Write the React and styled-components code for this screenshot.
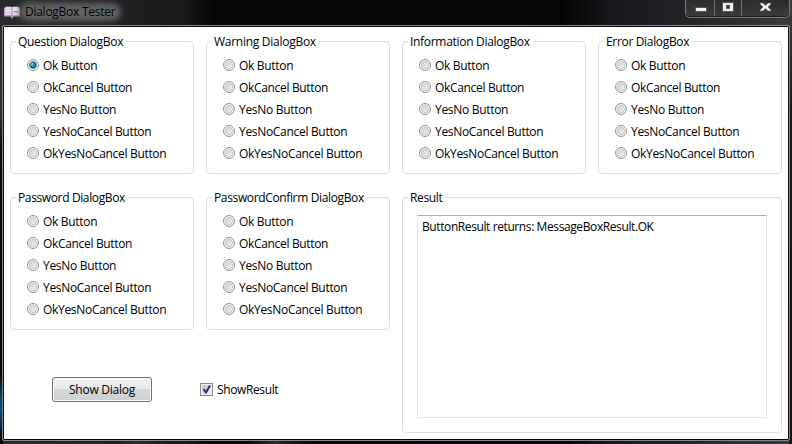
import React from "react";
import styled, { createGlobalStyle } from "styled-components";

const GlobalStyle = createGlobalStyle`
  html, body { margin: 0; padding: 0; overflow: hidden; background: #000; }
  * { box-sizing: border-box; }
`;

const Frame = styled.div`
  width: 792px;
  height: 444px;
  display: flex;
  flex-direction: column;
  padding: 0 2px 3px 2px;
  color: #000;
  font: 12px/16px "Open Sans", "Noto Sans", sans-serif;
  white-space: nowrap;
  background:
    radial-gradient(ellipse 5px 34px at 0 407px, #0b5c92 0, rgba(8, 50, 80, 0) 100%),
    linear-gradient(90deg, transparent 115px, #292b2e 135px, transparent 165px) 0 441px / 100% 3px no-repeat,
    linear-gradient(90deg, transparent 245px, #292b2e 275px, transparent 310px) 0 441px / 100% 3px no-repeat,
    linear-gradient(180deg, #292b2d 0, #303234 110px, #0b0c0d 150px, #050607 440px) 0 0 / 3px 100% no-repeat,
    linear-gradient(180deg, #3b3d3e 0, #17191a 110px, #17120c 400px) 789px 0 / 3px 100% no-repeat,
    linear-gradient(24deg, transparent 72%, rgba(65, 68, 70, 0.5) 94%) 592px 0 / 200px 26px no-repeat,
    linear-gradient(90deg, #292b2d 0, #1d1f20 130px, #17191b 185px, #020405 215px, #020405 560px, #15171a 610px, #202325 680px, #393c3e 792px);
`;

const TitleBar = styled.header`
  height: 25px;
  display: flex;
  align-items: flex-start;
  justify-content: space-between;
`;

const TitleGroup = styled.div`
  display: flex;
  align-items: center;
  padding: 4px 0 0 2px;
`;

const Title = styled.span`
  position: relative;
  z-index: 0;
  margin-left: 5px;
  letter-spacing: ${(p) => p.$track}px;
  &::before {
    content: "";
    position: absolute;
    z-index: -1;
    inset: -1px -6px -1px -6px;
    border-radius: 9px;
    background: #626466;
    filter: blur(3px);
  }
`;

const CaptionButtons = styled.div`
  width: 105px;
  height: 18px;
  display: grid;
  grid-template-columns: 29px 27px 1fr;
  border: 1px solid #77797a;
  border-top: 0;
  border-radius: 0 0 5px 5px;
  background: #303234;
  box-shadow: inset 0 -1px 0 #1b1d1e;
`;

const CaptionButton = styled.button`
  display: flex;
  justify-content: center;
  padding: 0;
  border: 0;
  border-right: 1px solid ${(p) => (p.$last ? "transparent" : "#707274")};
  background: linear-gradient(180deg, #2b2d2f, #393b3d);
  border-radius: ${(p) => (p.$last ? "0 0 4px 0" : "0")};
  height: 16px;
`;

const Client = styled.main`
  width: 788px;
  height: 416px;
  border: 1px solid #85878a;
  border-radius: 2px;
  outline: 1px solid #080808;
  outline-offset: -2px;
  padding: 9px 0 0 7px;
  background: #fff;
  display: grid;
  grid-template-columns: repeat(3, 184px) 184px;
  grid-template-rows: 139px 139px 103px;
  column-gap: 12px;
  row-gap: 17px;
`;

const Group = styled.fieldset`
  position: relative;
  width: 100%;
  min-width: 0;
  height: ${(p) => (p.$tall ? "236px" : "133px")};
  grid-column: ${(p) => (p.$tall ? "3 / 5" : "auto")};
  grid-row: ${(p) => (p.$tall ? "2 / 4" : "auto")};
  margin: 6px 0 0;
  padding: 0;
  border: 1px solid #d5dfe5;
  border-radius: 4px;
`;

const Legend = styled.span`
  position: absolute;
  top: -8px;
  left: 5px;
  padding: 0 3px 0 2px;
  background: #fff;
  letter-spacing: ${(p) => p.$track}px;
`;

const Options = styled.div`
  display: flex;
  flex-direction: column;
  padding: 13px 0 0 16px;
`;

const Option = styled.label`
  height: 22px;
  display: flex;
  align-items: center;
  gap: 4px;
`;

const Text = styled.span`
  letter-spacing: ${(p) => p.$track}px;
`;

const Radio = styled.span`
  width: 12px;
  height: 12px;
  margin-bottom: 2px;
  border: 1px solid #929393;
  border-radius: 50%;
  background: ${(p) =>
    p.$on
      ? "radial-gradient(circle at 4px 4px, #83d8f1 0, rgba(131, 216, 241, 0) 2.5px), radial-gradient(circle at 5px 5px, #1f86b4 1.5px, #17516f 3.2px, #f0f2f3 4.1px)"
      : "radial-gradient(circle at 5px 5px, transparent 2.8px, #bfc1c3 3.4px, #f4f4f4 4.3px), linear-gradient(135deg, #c8cbce, #f4f4f4)"};
`;

const Output = styled.div`
  width: 350px;
  height: 203px;
  margin: 17px 0 0 14px;
  padding: 3px 4px;
  border: 1px solid #e3e5e7;
  border-top-color: #abadb3;
  border-radius: 1px;
`;

const Footer = styled.div`
  grid-column: 1 / 3;
  display: flex;
  align-items: flex-start;
  padding: 30px 0 0 42px;
`;

const PushButton = styled.button`
  width: 100px;
  height: 25px;
  padding: 0;
  border: 1px solid #707070;
  border-radius: 3px;
  box-shadow: inset 0 0 0 1px #fafafa;
  background: linear-gradient(180deg, #f3f3f3 0, #e8e9ea 48%, #d6d8da 50%, #cdd0d2 100%);
  font: inherit;
  color: #000;
`;

const CheckLabel = styled.label`
  display: flex;
  align-items: center;
  gap: 4px;
  height: 25px;
  margin-left: 48px;
`;

const CheckBox = styled.span`
  width: 13px;
  height: 13px;
  border: 1px solid #858789;
  background: linear-gradient(135deg, #b9bdc5, #f5f5f5);
  box-shadow: inset 0 0 0 1px #f2f2f2;
  svg { display: block; }
`;

const groups = [
  { name: "Question DialogBox", track: -0.3, selected: 0 },
  { name: "Warning DialogBox", track: -0.27 },
  { name: "Information DialogBox", track: -0.3 },
  { name: "Error DialogBox", track: -0.33 },
  { name: "Password DialogBox", track: -0.37 },
  { name: "PasswordConfirm DialogBox", track: -0.36 },
];

const options = [
  { label: "Ok Button", track: -0.31 },
  { label: "OkCancel Button", track: -0.33 },
  { label: "YesNo Button", track: -0.3 },
  { label: "YesNoCancel Button", track: -0.31 },
  { label: "OkYesNoCancel Button", track: -0.31 },
];

function BookIcon() {
  return (
    <svg width="16" height="16" viewBox="0 0 16 16">
      <path d="M0 4 2 2.500h5l1 1 1-1h5L16 4v8.500H9.500L8 15l-1.500-2.500H0z" fill="#b99abb" />
      <path d="M1 4.500 2.500 3H7l1 1v7H1z" fill="#d9dbef" />
      <path d="M8 4l1-1h4.500L15 4.500V11H8z" fill="#efe2ee" />
      <path d="M1 9h6.500M8.500 9H15" stroke="#e8cbe0" strokeWidth="2" />
      <path d="M8 4v8M9.500 7.500H14" stroke="#a184ad" fill="none" />
    </svg>
  );
}

export default function App() {
  return (
    <>
      <GlobalStyle />
      <Frame>
        <TitleBar>
          <TitleGroup>
            <BookIcon />
            <Title $track={-0.26}>DialogBox Tester</Title>
          </TitleGroup>
          <CaptionButtons>
            <CaptionButton aria-label="Minimize">
              <svg width="28" height="16">
                <rect x="9.5" y="7.5" width="11" height="4" fill="#f4f4f4" stroke="#55585b" />
              </svg>
            </CaptionButton>
            <CaptionButton aria-label="Maximize">
              <svg width="26" height="16">
                <path d="M7.500 2.500h11v9h-11zM11.500 5.500v3h3v-3z" fill="#f1f1f1" stroke="#55585b" fillRule="evenodd" />
              </svg>
            </CaptionButton>
            <CaptionButton $last aria-label="Close">
              <svg width="46" height="16">
                <path d="M18 3h3l2.5 2.5L26 3h3v1l-3 3 3 3v1h-3l-2.500-2.500L21 11h-3v-1l3-3-3-3z" fill="#f4f4f4" stroke="#55585b" strokeWidth=".5" />
              </svg>
            </CaptionButton>
          </CaptionButtons>
        </TitleBar>
        <Client>
          {groups.map(({ name, track, selected }) => (
            <Group key={name}>
              <Legend $track={track}>{name}</Legend>
              <Options>
                {options.map((option, i) => (
                  <Option key={option.label}>
                    <Radio $on={i === selected} />
                    <Text $track={option.track}>{option.label}</Text>
                  </Option>
                ))}
              </Options>
            </Group>
          ))}
          <Group $tall>
            <Legend $track={-0.35}>Result</Legend>
            <Output>
              <Text $track={-0.4}>ButtonResult returns: MessageBoxResult.OK</Text>
            </Output>
          </Group>
          <Footer>
            <PushButton>
              <Text $track={-0.25}>Show Dialog</Text>
            </PushButton>
            <CheckLabel>
              <CheckBox>
                <svg width="11" height="11">
                  <path d="M2.500 5 5 8.500 9 1.500" fill="none" stroke="#2c2c7c" strokeWidth="2" />
                </svg>
              </CheckBox>
              <Text $track={-0.38}>ShowResult</Text>
            </CheckLabel>
          </Footer>
        </Client>
      </Frame>
    </>
  );
}
